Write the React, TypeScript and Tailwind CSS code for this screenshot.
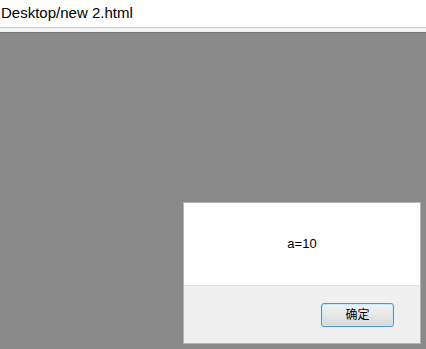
export default function App() {
  return (
    <div className="flex h-[349px] w-[426px] flex-col overflow-hidden bg-white font-['Liberation_Sans','Noto_Sans_CJK_SC',sans-serif]">
      <div className="flex h-[28px] items-center border-b border-[#c9c9c9] pl-[1px]">
        <span className="text-[15px] text-black">Desktop/new 2.html</span>
      </div>
      <div className="h-[4px] bg-[#f4f4f4]" />
      <div className="h-[1px] bg-[#7a7a7a]" />
      <div className="flex flex-1 items-end justify-end bg-[#8a8a8a] pb-[5px] pr-[5px]">
        <div className="flex h-[142px] w-[238px] flex-col border border-[#b4b4b4] bg-white">
          <div className="flex flex-1 items-center justify-center border-b border-[#dfdfdf] text-[13px] text-black">
            a=10
          </div>
          <div className="flex h-[57px] items-center justify-end bg-[#f0f0f0] pr-[26px]">
            <button className="flex h-[24px] w-[73px] items-center justify-center rounded-[3px] border border-[#3c9bd6] bg-gradient-to-b from-[#f3f3f3] to-[#dadada] text-[12px] text-black shadow-[inset_0_0_0_1px_#c9e9f9]">
              确定
            </button>
          </div>
        </div>
      </div>
    </div>
  );
}
